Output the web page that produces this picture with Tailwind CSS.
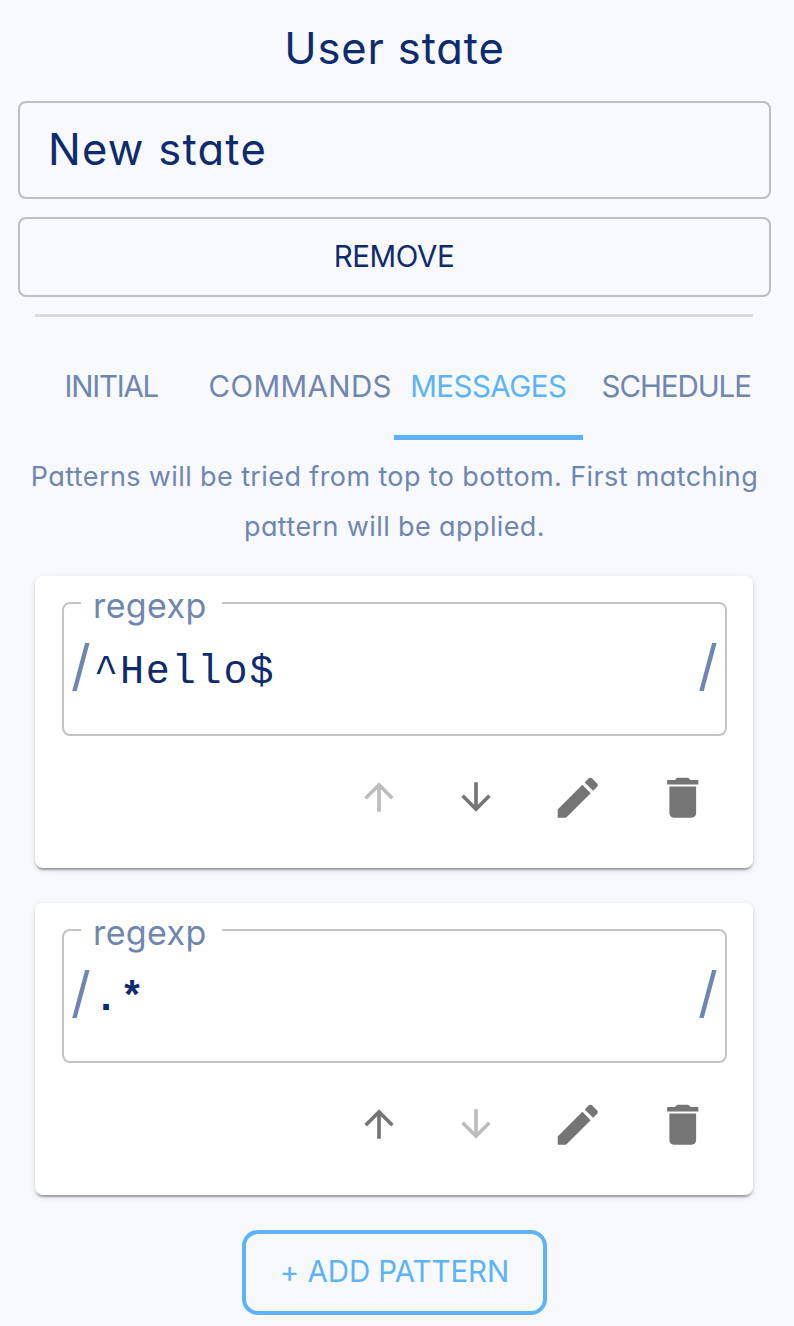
<!DOCTYPE html>
<html lang="en">
<head>
<meta charset="utf-8">
<title>User state</title>
<script src="https://cdn.jsdelivr.net/npm/@tailwindcss/browser@4"></script>
</head>
<body class="h-[1326px] w-[794px] overflow-hidden bg-[#f8f9fd] font-['Inter','Lato',sans-serif] text-[#0d2b6e] [font-feature-settings:'cv11','calt'_0]">
<svg class="hidden">
  <symbol id="up" viewBox="0 0 24 24"><path d="M4 12l1.41 1.41L11 7.83V20h2V7.83l5.58 5.59L20 12l-8-8-8 8z"/></symbol>
  <symbol id="down" viewBox="0 0 24 24"><path d="M20 12l-1.41-1.41L13 16.17V4h-2v12.17l-5.58-5.59L4 12l8 8 8-8z"/></symbol>
  <symbol id="edit" viewBox="0 0 24 24"><path d="M3 17.25V21h3.75L17.81 9.94l-3.75-3.75L3 17.25zM20.71 7.04c.39-.39.39-1.02 0-1.41l-2.34-2.34c-.39-.39-1.02-.39-1.41 0l-1.83 1.83 3.75 3.75 1.83-1.83z"/></symbol>
  <symbol id="trash" viewBox="0 0 24 24"><path d="M6 19c0 1.1.9 2 2 2h8c1.1 0 2-.9 2-2V7H6v12zM19 4h-3.5l-1-1h-5l-1 1H5v2h14V4z"/></symbol>
</svg>
<main class="flex flex-col">
  <h1 class="flex h-[101px] w-[789px] items-start justify-center pt-[20px] text-[43.5px] leading-[56px] tracking-[0.85px]">User state</h1>
  <div class="ml-[18px] flex h-[98px] w-[753px] items-center rounded-lg border-2 border-[#bdbec1] pl-[28px] text-[43.5px] tracking-[1.25px]">New state</div>
  <button class="mt-[18px] ml-[18px] flex h-[80px] w-[753px] items-center justify-center rounded-lg border-2 border-[#bdbec1] pr-px pb-[2px] text-[29.5px] tracking-[-0.4px]">REMOVE</button>
  <div class="mt-[17px] ml-[35px] h-[3px] w-[718px] bg-[#dadbdf]"></div>
  <nav class="ml-[17px] grid h-[123px] w-[754px] grid-cols-4 pt-[21px] text-[29.5px] text-[#6f86b0]">
    <div class="flex items-center justify-center border-b-[5px] border-transparent tracking-[-1.2px]">INITIAL</div>
    <div class="flex items-center justify-center border-b-[5px] border-transparent pl-px tracking-[0.4px]">COMMANDS</div>
    <div class="flex items-center justify-center border-b-[5px] border-[#5cb3fa] tracking-[-0.5px] text-[#5cb3fa]">MESSAGES</div>
    <div class="flex items-center justify-center border-b-[5px] border-transparent pr-px tracking-[-1.05px]">SCHEDULE</div>
  </nav>
  <p class="mt-[12px] flex h-[124px] w-[789px] flex-col items-center text-[27px] leading-[50px] tracking-[0.39px] whitespace-nowrap text-[#6f86b0]"><span>Patterns will be tried from top to bottom. First matching</span><span>pattern will be applied.</span></p>

  <section class="ml-[35px] flex h-[292px] w-[718px] flex-col rounded-lg bg-white px-[27px] pt-[26px] shadow-[0_4px_2px_-2px_rgba(0,0,0,0.2),0_2px_2px_rgba(0,0,0,0.14),0_2px_6px_rgba(0,0,0,0.12)]">
    <div class="relative flex h-[134px] w-[665px] items-start rounded-lg border-2 border-[#c4c4c4] pt-[32px]">
      <span class="absolute -top-[22px] left-[17px] w-[141px] bg-white pl-[12px] text-[34px] leading-[48px] tracking-[0.4px] text-[#6f86b0]">regexp</span>
      <span class="ml-[7px] w-[23px] text-[55px] leading-[59px] text-[#6f86b0]">/</span>
      <span class="flex-1 pt-[7px] font-['Liberation_Mono',monospace] text-[40px] leading-[60px] tracking-[1.9px]">^Hello$</span>
      <span class="mr-[5px] w-[22px] text-[55px] leading-[59px] text-[#6f86b0]">/</span>
    </div>
    <div class="mt-[34.5px] mr-[17px] flex items-center justify-end fill-[#757575]">
      <svg class="mr-[53px] size-[44px] fill-[#bdbdbd]"><use href="#up"/></svg>
      <svg class="mr-[53px] size-[44px]"><use href="#down"/></svg>
      <svg class="mr-[51px] size-[53.5px]"><use href="#edit"/></svg>
      <svg class="size-[53.5px]"><use href="#trash"/></svg>
    </div>
  </section>

  <section class="mt-[35px] ml-[35px] flex h-[292px] w-[718px] flex-col rounded-lg bg-white px-[27px] pt-[26px] shadow-[0_4px_2px_-2px_rgba(0,0,0,0.2),0_2px_2px_rgba(0,0,0,0.14),0_2px_6px_rgba(0,0,0,0.12)]">
    <div class="relative flex h-[134px] w-[665px] items-start rounded-lg border-2 border-[#c4c4c4] pt-[32px]">
      <span class="absolute -top-[22px] left-[17px] w-[141px] bg-white pl-[12px] text-[34px] leading-[48px] tracking-[0.4px] text-[#6f86b0]">regexp</span>
      <span class="ml-[7px] w-[23px] text-[55px] leading-[59px] text-[#6f86b0]">/</span>
      <span class="flex-1 pt-[7px] font-['Liberation_Mono',monospace] text-[40px] leading-[60px] font-bold tracking-[1.9px]">.*</span>
      <span class="mr-[5px] w-[22px] text-[55px] leading-[59px] text-[#6f86b0]">/</span>
    </div>
    <div class="mt-[34.5px] mr-[17px] flex items-center justify-end fill-[#757575]">
      <svg class="mr-[53px] size-[44px]"><use href="#up"/></svg>
      <svg class="mr-[53px] size-[44px] fill-[#bdbdbd]"><use href="#down"/></svg>
      <svg class="mr-[51px] size-[53.5px]"><use href="#edit"/></svg>
      <svg class="size-[53.5px]"><use href="#trash"/></svg>
    </div>
  </section>

  <button class="mt-[35px] ml-[242px] flex h-[85px] w-[305px] items-center justify-center rounded-2xl border-4 border-[#5cb3fa] pb-[2px] text-[29.5px] tracking-[-0.1px] text-[#5cb3fa]">+ ADD PATTERN</button>
</main>
</body>
</html>
